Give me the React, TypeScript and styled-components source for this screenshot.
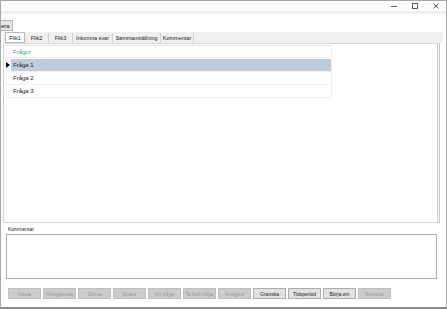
import React from 'react';
import styled, { createGlobalStyle } from 'styled-components';

const GlobalStyle = createGlobalStyle`
    html, body {
        margin: 0;
        padding: 0;
        background: #ffffff;
    }
    body {
        font-family: "Liberation Sans", Arial, sans-serif;
    }
`;

const Window = styled.div`
    width: 447px;
    height: 309px;
    box-sizing: border-box;
    border: 1px solid #a8a8a8;
    border-bottom: 2px solid #8c8c8c;
    display: flex;
    flex-direction: column;
    background: #ffffff;
    overflow: hidden;
    font-size: 6px;
    color: #1a1a1a;
`;

const TitleBar = styled.div`
    height: 10px;
    display: flex;
    justify-content: flex-end;
    align-items: center;
    background: #ffffff;
`;

const WinButton = styled.div`
    width: 21px;
    height: 10px;
    display: flex;
    align-items: center;
    justify-content: center;
`;

const TitleSep = styled.div`
    height: 3px;
    background: #f0f0f0;
`;

const MenuStrip = styled.div`
    height: 17px;
    display: flex;
    align-items: flex-end;
    padding-bottom: 1px;
    background: #ffffff;
`;

const MenuItem = styled.div`
    height: 9px;
    padding: 0 2px 0 0;
    display: flex;
    align-items: center;
    background: #e5e5e5;
    border: 1px solid #b4b4b4;
    border-left: none;
    font-size: 6px;
`;

const Body = styled.div`
    flex: 1;
    display: flex;
    flex-direction: column;
    padding: 0 6px 0 2px;
`;

const TabStrip = styled.div`
    height: 11px;
    display: flex;
    align-items: stretch;
    padding-left: 2px;
    background: #f0f0f0;
    margin-right: -3px;
`;

const Tab = styled.div<{ $active?: boolean; $w: number }>`
    width: ${p => p.$w}px;
    box-sizing: border-box;
    display: flex;
    align-items: center;
    justify-content: center;
    font-size: 5.5px;
    color: #222;
    background: ${p => (p.$active ? '#ffffff' : 'transparent')};
    border: ${p => (p.$active ? '1px solid #b8b8b8' : 'none')};
    border-right: 1px solid ${p => (p.$active ? '#b8b8b8' : '#d0d0d0')};
    margin-top: ${p => (p.$active ? '0' : '1px')};
`;

const TabPage = styled.div`
    height: 180px;
    box-sizing: border-box;
    border: 1px solid #d6d6d6;
    border-right: 3px double #c8c8c8;
    background: #ffffff;
    padding: 1px 0 0 1px;
`;

const Grid = styled.div`
    width: 327px;
    display: flex;
    flex-direction: column;
`;

const GridRow = styled.div<{ $header?: boolean }>`
    height: 13px;
    box-sizing: border-box;
    display: flex;
    align-items: stretch;
    border-bottom: 1px solid #f0f0f0;
    border-top: ${p => (p.$header ? '1px solid #e4e4e4' : 'none')};
    margin-bottom: ${p => (p.$header ? '1px' : '0')};
`;

const RowHead = styled.div`
    width: 6px;
    display: flex;
    align-items: center;
    justify-content: center;
    background: #ffffff;
`;

const Cell = styled.div<{ $selected?: boolean; $header?: boolean }>`
    flex: 1;
    display: flex;
    align-items: center;
    padding-left: 2px;
    font-size: 6px;
    color: ${p => (p.$header ? '#3a9a9a' : '#1a1a1a')};
    background: ${p => (p.$selected ? '#bfcddb' : '#ffffff')};
    border-right: 1px solid #f0f0f0;
`;

const CommentLabel = styled.div`
    height: 10px;
    display: flex;
    align-items: center;
    padding: 1px 0 0 5px;
    font-size: 5px;
`;

const CommentBox = styled.div`
    height: 45px;
    margin: 0 0 0 3px;
    width: 431px;
    box-sizing: border-box;
    border: 1px solid #adadad;
    background: #ffffff;
`;

const ButtonRow = styled.div`
    display: flex;
    gap: 2px;
    padding: 9px 0 0 5px;
`;

const Button = styled.div<{ $disabled?: boolean }>`
    width: 33px;
    height: 11px;
    box-sizing: border-box;
    display: flex;
    align-items: center;
    justify-content: center;
    font-size: 5px;
    background: ${p => (p.$disabled ? '#cccccc' : '#e1e1e1')};
    border: 1px solid ${p => (p.$disabled ? '#bfbfbf' : '#adadad')};
    color: ${p => (p.$disabled ? '#9a9a9a' : '#1a1a1a')};
    white-space: nowrap;
`;

const tabs = [
    { label: 'Flik1', w: 20 },
    { label: 'Flik2', w: 24 },
    { label: 'Flik3', w: 24 },
    { label: 'Inkomna svar', w: 40 },
    { label: 'Sammanställning', w: 48 },
    { label: 'Kommentar', w: 33 },
];

const questions = ['Fråga 1', 'Fråga 2', 'Fråga 3'];

const buttons = [
    { label: 'Nästa', disabled: true },
    { label: 'Föregående', disabled: true },
    { label: 'Skriva', disabled: true },
    { label: 'Spara', disabled: true },
    { label: 'Ny fråga', disabled: true },
    { label: 'Ta bort fråga', disabled: true },
    { label: 'Ändgera', disabled: true },
    { label: 'Granska' },
    { label: 'Tidsperiod' },
    { label: 'Börja om' },
    { label: 'Resultat', disabled: true },
];

export default function App() {
    return (
        <>
            <GlobalStyle />
            <Window>
                <TitleBar>
                    <WinButton>
                        <svg width="6" height="6" viewBox="0 0 6 6"><path d="M0 3.5H6" stroke="#333" strokeWidth="0.8" /></svg>
                    </WinButton>
                    <WinButton>
                        <svg width="6" height="6" viewBox="0 0 6 6"><rect x="0.5" y="0.5" width="5" height="5" fill="none" stroke="#333" strokeWidth="0.8" /></svg>
                    </WinButton>
                    <WinButton>
                        <svg width="6" height="6" viewBox="0 0 6 6"><path d="M0.5 0.5L5.5 5.5M5.5 0.5L0.5 5.5" stroke="#333" strokeWidth="0.8" /></svg>
                    </WinButton>
                </TitleBar>
                <TitleSep />
                <MenuStrip>
                    <MenuItem>era</MenuItem>
                </MenuStrip>
                <Body>
                    <TabStrip>
                        {tabs.map((t, i) => (
                            <Tab key={t.label} $w={t.w} $active={i === 0}>{t.label}</Tab>
                        ))}
                    </TabStrip>
                    <TabPage>
                        <Grid>
                            <GridRow $header>
                                <RowHead />
                                <Cell $header>Frågor</Cell>
                            </GridRow>
                            {questions.map((q, i) => (
                                <GridRow key={q}>
                                    <RowHead>
                                        {i === 0 && (
                                            <svg width="4" height="6" viewBox="0 0 4 6"><path d="M0 0L4 3L0 6Z" fill="#000" /></svg>
                                        )}
                                    </RowHead>
                                    <Cell $selected={i === 0}>{q}</Cell>
                                </GridRow>
                            ))}
                        </Grid>
                    </TabPage>
                    <CommentLabel>Kommentar</CommentLabel>
                    <CommentBox />
                    <ButtonRow>
                        {buttons.map(b => (
                            <Button key={b.label} $disabled={b.disabled}>{b.label}</Button>
                        ))}
                    </ButtonRow>
                </Body>
            </Window>
        </>
    );
}
